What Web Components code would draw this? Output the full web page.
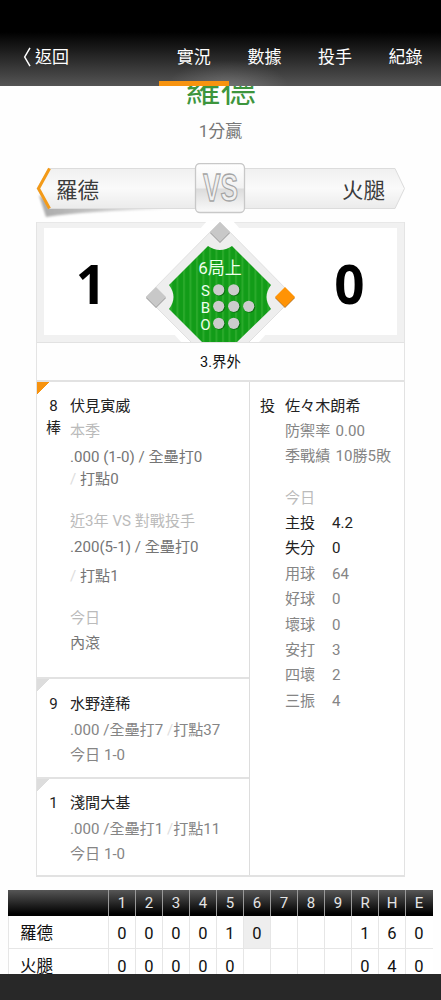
<!DOCTYPE html>
<html lang="zh-Hant">
<head>
<meta charset="utf-8">
<meta name="viewport" content="width=device-width, initial-scale=1">
<title>羅德 VS 火腿</title>
<style>
  html, body { margin: 0; height: 100%; overflow: hidden; background: #fefefe; }
  body { font-family: Roboto, "Noto Sans CJK TC", sans-serif; color: #222; }
</style>
</head>
<body>
<game-page>
  <nav-bar slot="nav" back="返回" tabs="實況,數據,投手,紀錄" active="0"></nav-bar>
  <game-result team="羅德">1分贏</game-result>
  <versus-bar away="羅德" home="火腿"></versus-bar>
  <score-board away="1" home="0" inning="6局上">3.界外</score-board>
  <match-up>
    <player-card slot="left" class="now" num="8" unit="棒" name="伏見寅威"></player-card>
    <player-card slot="left" class="next" num="9" name="水野達稀"></player-card>
    <player-card slot="left" class="last" num="1" name="淺間大基"></player-card>
    <player-card slot="right" class="pitcher" num="投" name="佐々木朗希"></player-card>
  </match-up>
  <line-score></line-score>
</game-page>

<script>
class GamePage extends HTMLElement {
  constructor() {
    super();
    this.attachShadow({ mode: 'open' }).innerHTML = `
<style>
  :host { display: flex; flex-direction: column; height: 1000px; overflow: hidden; }
  main { flex: 1; min-height: 0; overflow: hidden; }
  footer { flex: none; height: 26px; background: #282828; }
</style>
<slot name="nav"></slot>
<main><slot></slot></main>
<footer></footer>`;
  }
}

class NavBar extends HTMLElement {
  constructor() {
    super();
    const tabs = this.getAttribute('tabs').split(',');
    const active = Number(this.getAttribute('active'));
    this.attachShadow({ mode: 'open' }).innerHTML = `
<style>
  :host {
    display: flex; flex: none; height: 86px; box-sizing: border-box; padding-top: 28px;
    background:
      radial-gradient(ellipse 60px 26px at 228px 86px, rgba(255,255,255,.18), transparent),
      linear-gradient(#000 32px, #1c1c1c 50px, #555 86px);
    color: #fff; font-size: 17px; line-height: 58px;
  }
  .back { display: flex; align-items: center; gap: 4px; width: 135.5px; padding-left: 23px; height: 58px; }
  .tab { width: 70.6px; height: 58px; box-sizing: border-box; text-align: center; }
  .tab.on { border-bottom: 5px solid #f7930f; }
</style>
<div class="back">
  <svg width="8" height="20" viewBox="0 0 8 20" fill="none" stroke="#fff" stroke-width="1.5"><path d="M7 .8 1.7 10 7 19.2"/></svg>
  <span>${this.getAttribute('back')}</span>
</div>
${tabs.map((t, i) => `<div class="tab ${i === active ? 'on' : ''}">${t}</div>`).join('')}`;
  }
}

class GameResult extends HTMLElement {
  constructor() {
    super();
    this.attachShadow({ mode: 'open' }).innerHTML = `
<style>
  :host { display: flow-root; height: 77px; text-align: center; }
  .team { height: 35px; margin-top: -13px; font-size: 35.5px; line-height: 35px; color: #3d953d; }
  .text { margin-top: 11px; font-size: 17px; line-height: 24px; color: #777; }
</style>
<div class="team">${this.getAttribute('team')}</div>
<div class="text"><slot></slot></div>`;
  }
}

class VersusBar extends HTMLElement {
  constructor() {
    super();
    this.attachShadow({ mode: 'open' }).innerHTML = `
<style>
  :host { display: block; position: relative; height: 59px; }
  svg { display: block; position: absolute; left: 0; top: 0; }
  .names {
    position: relative; display: flex; justify-content: space-between;
    padding: 13px 56px 0; font-size: 21.5px; line-height: 30px; color: #3c3c3c;
  }
</style>
<svg width="441" height="59" viewBox="0 0 441 59">
  <defs>
    <linearGradient id="bar" x2="0" y2="1"><stop stop-color="#f0f0f0"/><stop offset=".5" stop-color="#fafafa"/><stop offset="1" stop-color="#ebebeb"/></linearGradient>
    <linearGradient id="box" x2="0" y2="1"><stop stop-color="#fff"/><stop offset=".5" stop-color="#f2f2f2"/><stop offset=".52" stop-color="#dcdcdc"/><stop offset="1" stop-color="#fafafa"/></linearGradient>
    <linearGradient id="shade" x2="1" y2="0"><stop stop-color="#aaa"/><stop offset=".4" stop-color="#c2c2c2"/><stop offset="1" stop-color="#eee"/></linearGradient>
    <filter id="soft" x="-10%" y="-20%" width="120%" height="150%"><feGaussianBlur stdDeviation="1"/></filter>
  </defs>
  <path d="M39 32 46 54 Q85 48 168 46 L50 40Z" fill="url(#shade)" filter="url(#soft)"/>
  <path d="M49 5.500H395L404.500 25.500 395 45.500H49L37 25.500Z" fill="url(#bar)" stroke="#dcdcdc"/>
  <path d="M49.500 5.500 38.500 25.500 49.500 45.500" fill="none" stroke="#f39a18" stroke-width="3"/>
  <rect x="195.500" y=".5" width="49" height="49" rx="4.500" fill="url(#box)" stroke="#c8c8c8" stroke-width="1.300"/>
  <text x="220.500" y="38" text-anchor="middle" textLength="35" lengthAdjust="spacingAndGlyphs" font-family="'Liberation Sans', sans-serif" font-weight="700" font-size="39" fill="#f0f0f0" stroke="#a4a4a4" stroke-width="1.300">VS</text>
</svg>
<div class="names"><span>${this.getAttribute('away')}</span><span>${this.getAttribute('home')}</span></div>`;
  }
}

class ScoreBoard extends HTMLElement {
  constructor() {
    super();
    const lamps = [['S', 71, 2], ['B', 87.500, 3], ['O', 104.500, 2]];
    const base = (x, y, fill, edge) => `
  <path d="M${x} ${y - 9}l10 10-10 10-10-10z" fill="${edge}"/>
  <path d="M${x} ${y - 10}l10 10-10 10-10-10z" fill="${fill}"/>`;
    this.attachShadow({ mode: 'open' }).innerHTML = `
<style>
  :host { display: block; margin: 0 36px; border: solid #e4e4e4; border-width: 0 1px; }
  .board {
    display: flex; height: 120px; box-sizing: border-box; justify-content: space-between;
    border: solid #f1f1f1; border-width: 6px 7px 0; box-shadow: inset 0 -7px #f1f1f1;
    background: #fff; position: relative;
  }
  .board::before { content: ""; position: absolute; left: -7px; right: -7px; top: -6px; border-top: 1px solid #e8e8e8; }
  .score { width: 94px; text-align: center; font: 700 53px/112px "Open Sans", sans-serif; color: #000; }
  .score:last-child { width: 95px; }
  /* the field overlaps the frame around both scores */
  svg { position: absolute; left: 92px; top: -7px; }
  .play {
    height: 37px; border: solid #e2e2e2; border-width: 1px 0 2px;
    text-align: center; font-size: 14.5px; line-height: 39px; color: #111;
  }
</style>
<div class="board">
  <div class="score">${this.getAttribute('away')}</div>
  <svg width="168" height="121" viewBox="136 0 168 121" font-family="Roboto, 'Noto Sans CJK TC', sans-serif">
    <defs>
      <pattern id="grass" width="6.500" height="10" patternUnits="userSpaceOnUse">
        <rect width="7" height="10" fill="#129c18"/><rect x="1" width="2" height="10" fill="#2aaa2b"/>
      </pattern>
    </defs>
    <path d="M207 0H233L300 76 258 122H182L140 76Z" fill="#fff"/>
    <path d="M220 1 294 76 248 122H192L146 76Z" fill="#eee" stroke="#e0e0e0"/>
    <path d="M208 25Q220 33 232 25L271 64Q262 76 271 88L237 121H202L169 88Q178 76 169 64Z" fill="url(#grass)"/>
    ${base(220, 11, '#c8c8c8', '#999')}
    ${base(156, 76, '#c8c8c8', '#999')}
    ${base(285, 76, '#ff9305', '#b77a30')}
    <text x="220" y="53" text-anchor="middle" font-size="17" fill="#eeffec">${this.getAttribute('inning')}</text>
    ${lamps.map(([label, y, n]) => `
    <text x="205.500" y="${y + 4}" text-anchor="middle" font-size="15" fill="#eeffec">${label}</text>
    ${Array.from({ length: n }, (_, i) => `
    <circle cx="${219.500 + i * 15}" cy="${y - 1.5}" r="5.800" fill="#0c7010"/>
    <circle cx="${218.700 + i * 15}" cy="${y - 2.2}" r="5.600" fill="#ccc"/>`).join('')}`).join('')}
  </svg>
  <div class="score">${this.getAttribute('home')}</div>
</div>
<div class="play"><slot></slot></div>`;
  }
}

class MatchUp extends HTMLElement {
  constructor() {
    super();
    this.attachShadow({ mode: 'open' }).innerHTML = `
<style>
  :host {
    display: flex; margin: 0 36px; height: 495px; box-sizing: border-box;
    border: solid #e2e2e2; border-width: 0 1px 2px; background: #fff;
  }
  .left { display: flex; flex-direction: column; width: 212px; border-right: 1px solid #ddd; }
  .right { flex: 1; }
</style>
<div class="left"><slot name="left"></slot></div>
<div class="right"><slot name="right"></slot></div>`;
  }
}

// [text, tone, gap above, value column]
const PLAYER_LINES = {
  now: [
    ['本季', 'pale', 3],
    ['.000 (1-0) / 全壘打0', '', 4],
    ['<i>/</i> 打點0', '', 0],
    ['近3年 VS 對戰投手', 'pale', 20],
    ['.200(5-1) / 全壘打0', '', 4],
    ['<i>/</i> 打點1', '', 7],
    ['今日', 'pale', 20],
    ['內滾', '', 3],
  ],
  next: [['.000 /全壘打7 <i>/</i>打點37', 'soft', 4], ['今日 1-0', 'soft', 3]],
  last: [['.000 /全壘打1 <i>/</i>打點11', 'soft', 4], ['今日 1-0', 'soft', 3]],
  pitcher: [
    ['防禦率&nbsp;0.00', 'soft', 3],
    ['季戰績&nbsp;10勝5敗', 'soft', 3],
    ['今日', 'pale', 20],
    ['主投', 'dark', 3.2, '4.2'],
    ['失分', 'dark', 3.2, '0'],
    ['用球', 'soft', 3.4, '64'],
    ['好球', 'soft', 3.4, '0'],
    ['壞球', 'soft', 3.4, '0'],
    ['安打', 'soft', 3.4, '3'],
    ['四壞', 'soft', 3.4, '2'],
    ['三振', 'soft', 3.4, '4'],
  ],
};

class PlayerCard extends HTMLElement {
  constructor() {
    super();
    const lines = PLAYER_LINES[this.className];
    this.attachShadow({ mode: 'open' }).innerHTML = `
<style>
  :host {
    display: flex; box-sizing: border-box; padding-top: 13px;
    font-size: 15.1px; line-height: 22px; color: #222; white-space: nowrap;
    background: linear-gradient(135deg, var(--corner, #ddd) 8.5px, transparent 9px);
  }
  :host(.now) { height: 296px; --corner: #f7930f; }
  :host(.next), :host(.last) { border-top: 2px solid #e2e2e2; height: 100px; padding-top: 14px; }
  :host(.last) { height: 98px; padding-top: 13px; }
  :host(.pitcher) { background: none; }
  :host(.pitcher) .lines { word-spacing: 1.5px; }
  .num { width: 33px; text-align: center; }
  :host(.pitcher) .num { width: 35px; }
  .lines { color: #757575; }
  .name, .dark { color: #222; }
  .soft { color: #858585; }
  .pale { color: #bbb; }
  .line { display: flex; white-space: pre; }
  .line b { width: 47px; font-weight: 400; }
  i { font-style: normal; color: #ddd; }
</style>
<div class="num">${this.getAttribute('num')}<br>${this.getAttribute('unit') || ''}</div>
<div class="lines">
  <div class="name">${this.getAttribute('name')}</div>
  ${lines.map(([text, tone, gap, value]) => `<div class="line ${tone}" style="margin-top:${gap}px">${value ? `<b>${text}</b><span>${value}</span>` : text}</div>`).join('')}
</div>`;
  }
}

class LineScore extends HTMLElement {
  constructor() {
    super();
    const heads = ['1', '2', '3', '4', '5', '6', '7', '8', '9', 'R', 'H', 'E'];
    const rows = [
      ['羅德', '0', '0', '0', '0', '1', '0', '', '', '', '1', '6', '0'],
      ['火腿', '0', '0', '0', '0', '0', '', '', '', '', '0', '4', '0'],
    ];
    this.attachShadow({ mode: 'open' }).innerHTML = `
<style>
  :host { display: block; margin: 13px 8px 0; }
  .row {
    display: grid; grid-template-columns: 100px repeat(12, 27px);
    font-size: 16.5px; line-height: 35px; height: 32px; color: #111; text-align: center;
    border-bottom: 1px solid #e6e6e6; background: #fff;
  }
  .row > span { height: 32px; border-left: 1px solid #e6e6e6; }
  .row > span:first-child { text-align: left; padding-left: 11px; }
  .row > span.live { background: #eee; }
  .head {
    height: 26px; border: 0; color: #e4e4e4; font-size: 15px; line-height: 27px;
    background: linear-gradient(#565656, #000 92%);
  }
  .head > span { height: 26px; border-left-color: #999; }
  .head > span:first-child { border: 0; }
</style>
<div class="row head"><span></span>${heads.map(h => `<span>${h}</span>`).join('')}</div>
${rows.map((r, n) => `<div class="row">${r.map((c, i) => `<span class="${n === 0 && i === 6 ? 'live' : ''}">${c}</span>`).join('')}</div>`).join('')}`;
  }
}

customElements.define('game-page', GamePage);
customElements.define('nav-bar', NavBar);
customElements.define('game-result', GameResult);
customElements.define('versus-bar', VersusBar);
customElements.define('score-board', ScoreBoard);
customElements.define('match-up', MatchUp);
customElements.define('player-card', PlayerCard);
customElements.define('line-score', LineScore);
</script>
</body>
</html>
